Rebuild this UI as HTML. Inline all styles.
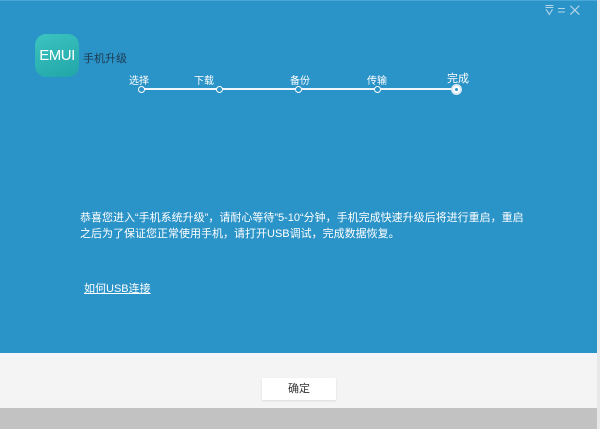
<!DOCTYPE html>
<html><head><meta charset="utf-8"><style>
body{margin:0;width:600px;height:429px;overflow:hidden;font-family:"Liberation Sans","Noto Sans CJK SC",sans-serif;position:relative;background:#c2c2c2}
.blue{position:absolute;left:0;top:0;width:597px;height:353px;background:#2a93c8;border-top:1px solid #4aa6d6}
.panel{position:absolute;left:0;top:353px;width:597px;height:52px;background:#f4f4f4;border-top:3px solid #f7f3fa}
.rb{position:absolute;left:597px;top:0;width:3px;height:429px;background:#e8e8e8}
.logo{position:absolute;left:35px;top:34px;width:44px;height:43px;border-radius:11px;background:linear-gradient(160deg,#3cc4c0,#21a6a8);color:#fff;font-size:15px;line-height:43px;text-align:center;letter-spacing:-0.5px}
.t{position:absolute;color:#fff;font-size:11px;white-space:nowrap}
.dot{position:absolute;top:86px;width:5px;height:5px;border:1.5px solid #fff;border-radius:50%;background:#2a93c8}
</style></head><body>
<div class="blue"></div>
<div class="rb"></div>
<div class="logo">EMUI</div>
<div class="t" style="left:83px;top:50px;color:#1d3a4e;font-size:11px">手机升级</div>
<div style="position:absolute;left:144px;top:88px;width:313px;height:2px;background:#eef6fb"></div>
<div class="t" style="left:129px;top:72px;font-size:10px">选择</div>
<div class="t" style="left:194px;top:72px;font-size:10px">下载</div>
<div class="t" style="left:290px;top:72px;font-size:10px">备份</div>
<div class="t" style="left:367px;top:72px;font-size:10px">传输</div>
<div class="t" style="left:447px;top:70px;font-size:11px">完成</div>
<div class="dot" style="left:138px"></div>
<div class="dot" style="left:216px"></div>
<div class="dot" style="left:295px"></div>
<div class="dot" style="left:374px"></div>
<div style="position:absolute;left:451px;top:84px;width:7px;height:7px;border:2px solid #d9e9f3;border-radius:50%;background:#fff"><div style="width:3px;height:3px;margin:2px;background:#2a93c8;border-radius:50%"></div></div>
<div class="t" style="left:545px;top:2px;color:#b8d6e8;font-size:14px">⩢ = ✕</div>
<div class="t" style="left:80px;top:210px;line-height:16px">恭喜您进入“手机系统升级”，请耐心等待”5-10“分钟，手机完成快速升级后将进行重启，重启<br>之后为了保证您正常使用手机，请打开USB调试，完成数据恢复。</div>
<div class="t" style="left:84px;top:280px;text-decoration:underline">如何USB连接</div>
<div class="panel"></div>
<div style="position:absolute;left:262px;top:378px;width:74px;height:22px;background:#fff;box-shadow:0 1px 2px rgba(0,0,0,.1);font-size:11px;color:#333;text-align:center;line-height:22px">确定</div>
</body></html>
